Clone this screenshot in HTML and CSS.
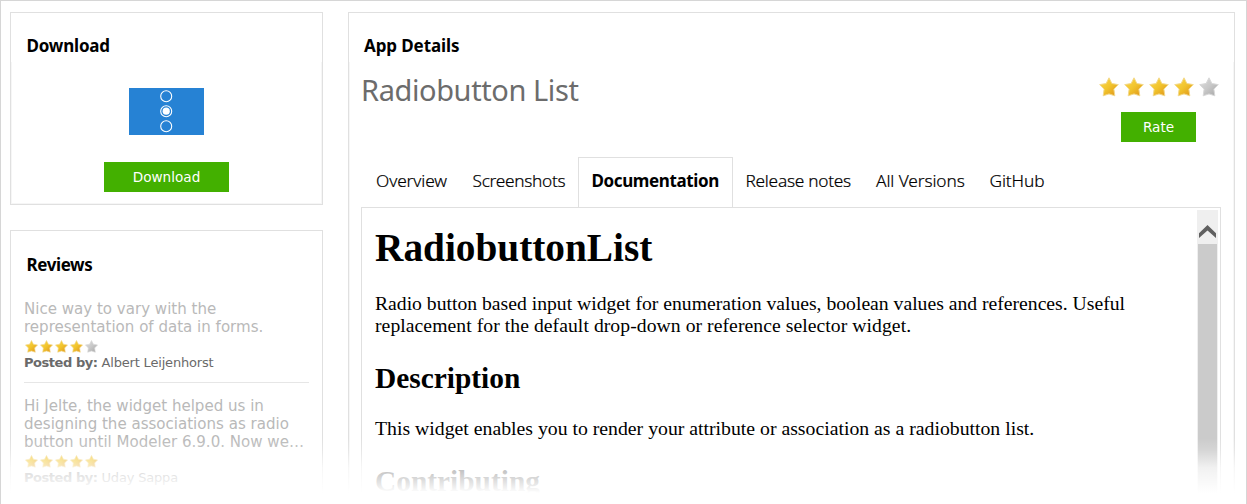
FILE: index.html
```html
<!DOCTYPE html>
<html lang="en">
<head>
<meta charset="utf-8">
<title>Radiobutton List</title>
<link rel="stylesheet" href="styles.css">
</head>
<body>
<svg class="defs" aria-hidden="true">
  <defs>
    <linearGradient id="gold" x1="0" y1="0" x2="1" y2="1"><stop offset="0" stop-color="#fcd954"/><stop offset=".5" stop-color="#f1c42c"/><stop offset="1" stop-color="#de8f18"/></linearGradient>
    <linearGradient id="silver" x1="0" y1="0" x2="1" y2="1"><stop offset="0" stop-color="#dedede"/><stop offset=".5" stop-color="#c8c8c8"/><stop offset="1" stop-color="#a4a4a4"/></linearGradient>
    <symbol id="star" viewBox="0 0 20 20"><path d="M10 .8 12.9 6.5 19.3 7.6 14.9 12.2 15.8 18.8 10 16.9 4.2 18.8 5.1 12.2.7 7.6 7.1 6.5Z" stroke-width="1" stroke-linejoin="round"/></symbol>
  </defs>
</svg>
<div class="page">
  <aside class="side">
    <section class="panel download">
      <h3 class="panel-title">Download</h3>
      <div class="panel-body download-body">
        <svg class="thumb" viewBox="0 0 75 47" fill="none" stroke="#fff" stroke-width="1.1">
          <rect width="75" height="47" fill="#2682d4" stroke="none"/>
          <circle cx="37.2" cy="8.2" r="5.5"/><circle cx="37.2" cy="23.2" r="5.5"/><circle cx="37.2" cy="38.2" r="5.5"/>
          <circle cx="37.2" cy="23.2" r="3.6" fill="#fff" stroke="none"/>
        </svg>
        <button class="btn btn-download">Download</button>
      </div>
    </section>
    <section class="panel reviews">
      <h3 class="panel-title title-reviews">Reviews</h3>
      <div class="reviews-body">
        <article class="review">
          <p class="review-text">Nice way to vary with the<br>representation of data in forms.</p>
          <div class="stars small"><svg class="star"><use href="#star"/></svg><svg class="star"><use href="#star"/></svg><svg class="star"><use href="#star"/></svg><svg class="star"><use href="#star"/></svg><svg class="star off"><use href="#star"/></svg></div>
          <p class="posted"><b>Posted by:</b> <span>Albert Leijenhorst</span></p>
        </article>
        <article class="review">
          <p class="review-text">Hi Jelte, the widget helped us in<br>designing the associations as radio<br>button until Modeler 6.9.0. Now we…</p>
          <div class="stars small"><svg class="star"><use href="#star"/></svg><svg class="star"><use href="#star"/></svg><svg class="star"><use href="#star"/></svg><svg class="star"><use href="#star"/></svg><svg class="star"><use href="#star"/></svg></div>
          <p class="posted"><b>Posted by:</b> <span>Uday Sappa</span></p>
        </article>
      </div>
    </section>
  </aside>
  <main class="panel main">
    <h3 class="panel-title title-details">App Details</h3>
    <div class="panel-body main-body">
      <header class="app-head">
        <h1 class="app-name">Radiobutton List</h1>
        <div class="rating">
          <div class="stars"><svg class="star"><use href="#star"/></svg><svg class="star"><use href="#star"/></svg><svg class="star"><use href="#star"/></svg><svg class="star"><use href="#star"/></svg><svg class="star off"><use href="#star"/></svg></div>
          <button class="btn btn-rate">Rate</button>
        </div>
      </header>
      <nav class="tabs">
        <a class="tab overview">Overview</a><a class="tab screenshots">Screenshots</a><a class="tab active">Documentation</a><a class="tab release">Release notes</a><a class="tab versions">All Versions</a><a class="tab">GitHub</a>
      </nav>
      <div class="doc">
        <div class="doc-text">
          <h1>RadiobuttonList</h1>
          <p class="intro">Radio button based input widget for enumeration values, boolean values and references. Useful<br><span class="second-line">replacement for the default drop-down or reference selector widget.</span></p>
          <h2>Description</h2>
          <p>This widget enables you to render your attribute or association as a radiobutton list.</p>
          <h2>Contributing</h2>
        </div>
        <div class="scrollbar">
          <svg class="arrow" viewBox="0 0 17 13"><path d="M0 8.2 8.5 0 17 8.2V13L8.5 5.6 0 13Z" fill="#606060"/></svg>
          <div class="scroll-thumb"></div>
        </div>
      </div>
    </div>
  </main>
  <div class="fade"></div>
</div>
</body>
</html>
```
FILE: styles.css
```css
* { box-sizing: border-box; }
body { margin: 0; background: #fff; overflow: hidden; }
h1, h2, h3, p { margin: 0; }
.defs { position: absolute; width: 0; height: 0; }

.page {
  position: relative;
  display: flex;
  gap: 25px;
  width: 1247px;
  height: 504px;
  padding: 11px 11px 0 9px;
  border: 1px solid #d6d6d6;
  border-bottom: 0;
  overflow: hidden;
}
.side { display: flex; flex-direction: column; gap: 25px; width: 313px; flex: none; }
.panel { border: 1px solid #e0e0e0; background: #fff; }
.download { height: 193px; flex: none; }
.reviews { height: 300px; flex: none; }
.panel-title {
  height: 49px;
  padding: 21px 0 0 15.5px;
  font: bold 17px/24px "Noto Sans", sans-serif;
  letter-spacing: -.2px;
  color: #000;
}
.title-reviews { padding-top: 22px; letter-spacing: -.4px; }
.title-details { padding-left: 15px; letter-spacing: -.1px; }
.panel-body { border: 1px solid #f6f6f6; border-top: 0; }
.download-body { display: flex; flex-direction: column; align-items: center; gap: 27px; height: 142px; padding-top: 26px; }
.thumb { width: 75px; height: 47px; flex: none; }
.btn {
  height: 30px;
  padding: 0;
  border: 0;
  background: #43b000;
  color: #fff;
  font: 13.6px/30px "DejaVu Sans", sans-serif;
}
.btn-download { width: 125px; }
.btn-rate { width: 75px; margin-right: 1px; }

.reviews-body { padding: 20px 13px 0; }
.review + .review { margin-top: 11px; padding-top: 14px; border-top: 1px solid #e6e6e6; }
.review-text { font: 15.05px/18px "DejaVu Sans", sans-serif; color: #b9b9b9; white-space: nowrap; }
.stars { display: flex; gap: 5px; }
.star { width: 20px; height: 20px; fill: url(#gold); stroke: #f3d98c; }
.star.off { fill: url(#silver); stroke: #d8d8d8; }
.stars.small { gap: 2px; padding: 4px 0 2px 1px; }
.small .star { width: 13px; height: 13px; }
.posted { font: 13px/16px "DejaVu Sans", sans-serif; color: #6a6a6a; white-space: nowrap; letter-spacing: -.18px; }
.posted b { letter-spacing: -.45px; }

.main { flex: 1; height: 493px; }
.main-body { height: 443px; padding: 7px 11px 0 11px; }
.app-head { display: flex; justify-content: space-between; height: 88px; }
.app-name { padding-top: 1px; font: 400 29px/40px "Noto Sans", sans-serif; letter-spacing: -.4px; color: #6c6c6c; }
.rating { display: flex; flex-direction: column; align-items: center; gap: 15px; padding: 8px 3px 0 0; }
.tabs { display: flex; height: 50px; padding-left: 15px; }
.tab { padding-top: 12px; font: 300 17.3px/24px "Noto Sans", sans-serif; letter-spacing: -.1px; color: #000; -webkit-text-stroke: .2px #000; white-space: nowrap; }
.overview { width: 96.5px; }
.screenshots { width: 105.5px; letter-spacing: -.3px; }
.active { width: 155px; padding: 11px 0 0 12.5px; margin-right: 12.5px; border: 1px solid #e0e0e0; border-bottom: 0; font-weight: bold; font-size: 17px; letter-spacing: -.38px; -webkit-text-stroke: 0; }
.release { width: 130.5px; letter-spacing: -.27px; }
.versions { width: 113.5px; }

.doc { display: flex; justify-content: space-between; width: 860px; height: 297px; border: 1px solid #e0e0e0; border-bottom: 0; padding: 2px 2px 0 13px; }
.doc-text { padding-top: 15px; font: 19.75px/22px "Liberation Serif", serif; color: #000; white-space: nowrap; }
.doc-text h1 { font-size: 39.3px; line-height: 46px; margin-bottom: 21px; }
.doc-text h2 { font-size: 29.4px; line-height: 34px; margin: 25px 0 22px; }
.doc-text .intro { font-size: 19.67px; }
.second-line { letter-spacing: .06px; }
.scrollbar { display: flex; flex-direction: column; align-items: center; width: 21px; background: #efefef; padding-top: 15px; }
.arrow { width: 17px; height: 13px; margin-bottom: 6px; flex: none; }
.scroll-thumb { width: 19px; flex: 1; background: #cbcbcb; }

.fade {
  position: absolute;
  left: -1px;
  right: -1px;
  bottom: 0;
  height: 66px;
  background: linear-gradient(rgba(255,255,255,0), rgba(255,255,255,.2) 12px, rgba(255,255,255,.74) 30px, #fff 55px);
}
```
